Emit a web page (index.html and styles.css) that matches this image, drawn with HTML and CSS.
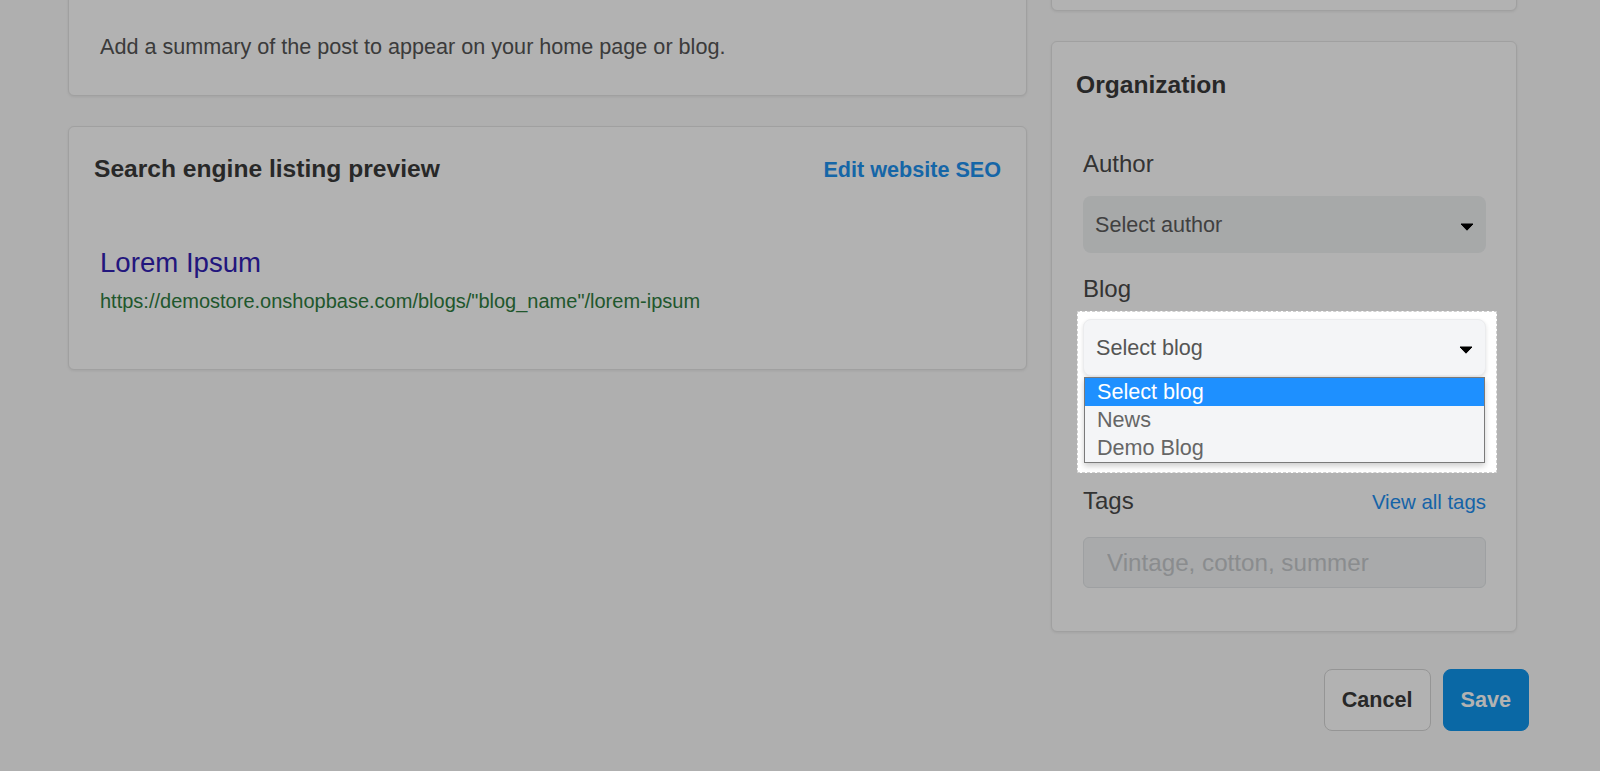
FILE: index.html
```html
<!DOCTYPE html>
<html lang="en">
<head>
    <meta charset="UTF-8">
    <meta name="viewport" content="width=device-width, initial-scale=1.0">
    <title>Edit blog post</title>
    <link rel="stylesheet" href="styles.css">
</head>
<body>
    <div class="page">
        <div class="columns">
            <div class="col-main">
                <div class="card card-excerpt">
                    <p class="hint">Add a summary of the post to appear on your home page or blog.</p>
                </div>

                <div class="card card-seo">
                    <div class="card-head">
                        <h2 class="card-title">Search engine listing preview</h2>
                        <a class="link-bold" href="#">Edit website SEO</a>
                    </div>
                    <div class="seo-preview">
                        <div class="seo-title">Lorem Ipsum</div>
                        <div class="seo-url">https://demostore.onshopbase.com/blogs/"blog_name"/lorem-ipsum</div>
                    </div>
                </div>
            </div>

            <div class="col-side">
                <div class="card card-visibility"></div>

                <div class="card card-org">
                    <h2 class="card-title">Organization</h2>

                    <div class="field">
                        <div class="field-label">Author</div>
                        <div class="select select-dim">
                            <span>Select author</span>
                            <svg class="caret" width="14" height="8" viewBox="0 0 14 8"><path d="M1 1h12L7 7.2z" fill="#000" stroke="#000" stroke-width="1" stroke-linejoin="round"/></svg>
                        </div>
                    </div>

                    <div class="field">
                        <div class="field-label">Blog</div>
                        <!-- tutorial spotlight: sits above the overlay -->
                        <div class="spot">
                            <div class="select select-open">
                                <span>Select blog</span>
                                <svg class="caret" width="14" height="8" viewBox="0 0 14 8"><path d="M1 1h12L7 7.2z" fill="#000" stroke="#000" stroke-width="1" stroke-linejoin="round"/></svg>
                            </div>
                            <ul class="options">
                                <li class="option active">Select blog</li>
                                <li class="option">News</li>
                                <li class="option">Demo Blog</li>
                            </ul>
                        </div>
                    </div>

                    <div class="field field-tags">
                        <div class="field-row">
                            <div class="field-label">Tags</div>
                            <a class="link" href="#">View all tags</a>
                        </div>
                        <input class="text-input" type="text" placeholder="Vintage, cotton, summer">
                    </div>
                </div>
            </div>
        </div>

        <div class="actions">
            <button class="btn btn-cancel">Cancel</button>
            <button class="btn btn-save">Save</button>
        </div>
    </div>

    <div class="overlay"></div>
</body>
</html>
```

FILE: styles.css
```css
body {
    margin: 0;
    background: #fbfbfb;
    font-family: "Liberation Sans", Arial, sans-serif;
    font-size: 21.6px;
    color: #3d3d3d;
}
.page {
    margin-top: -40px;
    padding: 0 71px 0 68px;
}
.columns {
    display: flex;
    gap: 24px;
    align-items: flex-start;
}
.col-main,
.col-side {
    display: flex;
    flex-direction: column;
    gap: 30px;
}
.col-main {
    width: 959px;
}
.col-side {
    width: 466px;
}
.card {
    background: #fff;
    border: 1px solid #e6e6e6;
    border-radius: 6px;
    box-shadow: 0 1px 3px rgba(0,0,0,0.08);
}
.card-title {
    margin: 0;
    font-size: 24.6px;
    line-height: 30px;
    font-weight: bold;
    color: #3a3a3a;
}

/* excerpt */
.card-excerpt {
    padding: 71px 31px 33px;
}
.hint {
    margin: 0;
    line-height: 30px;
    color: #555;
}

/* seo preview */
.card-seo {
    padding: 27px 25px 55px;
}
.card-head {
    display: flex;
    justify-content: space-between;
    align-items: baseline;
}
.link-bold {
    font-weight: bold;
    color: #1f93f0;
    text-decoration: none;
}
.seo-preview {
    margin: 62px 0 0 6px;
}
.seo-title {
    font-size: 27.6px;
    line-height: 34px;
    color: #3222b4;
}
.seo-url {
    margin-top: 8px;
    font-size: 20px;
    line-height: 26px;
    color: #2f7d41;
}

/* sidebar */
.card-visibility {
    height: 49px;
}
.card-org {
    padding: 28px 24px 43px;
}
.field {
    margin: 21px 6px 0 7px;
}
.card-title + .field {
    margin-top: 49px;
}
.field-tags {
    margin-top: 13px;
}
.field-label {
    font-size: 24px;
    line-height: 30px;
    color: #4a4a4a;
    margin-bottom: 17px;
}
.field-row {
    display: flex;
    justify-content: space-between;
    align-items: baseline;
    margin-bottom: 4px;
}
.link {
    font-size: 20.4px;
    color: #1f8ff0;
    text-decoration: none;
}
.select {
    height: 57px;
    box-sizing: border-box;
    display: flex;
    align-items: center;
    justify-content: space-between;
    padding: 0 12px;
    border-radius: 8px;
    color: #5c5c5c;
}
.select-dim {
    background: #f0f2f3;
}
.caret {
    margin-top: 4px;
}
.text-input {
    display: block;
    width: 100%;
    height: 51px;
    box-sizing: border-box;
    padding: 0 23px;
    border: 1px solid #e2e5e8;
    border-radius: 6px;
    background: #f2f4f5;
    font-family: inherit;
    font-size: 24.2px;
    color: #3d3d3d;
}
.text-input::placeholder {
    color: #c6c9cc;
}

/* open blog dropdown, highlighted over the overlay */
.spot {
    position: relative;
    z-index: 11;
    margin: -10px -11px 0 -6px;
    padding: 7px 10px 9px 5px;
    background: #fff;
    border: 1px dashed #cfcfcf;
}
.select-open {
    background: #f4f5f7;
    border: 1px solid #ebecee;
    box-shadow: 0 2px 4px rgba(0,0,0,0.12);
    color: #555;
}
.options {
    list-style: none;
    margin: 1px 1px 0;
    padding: 0;
    background: #f4f5f7;
    border: 1px solid #7a7a7a;
    box-shadow: 0 3px 6px rgba(0,0,0,0.2);
}
.option {
    height: 28px;
    line-height: 28px;
    padding: 0 12px;
    color: #666;
}
.option.active {
    background: #1e90ff;
    color: #fff;
}

/* footer buttons */
.actions {
    display: flex;
    justify-content: flex-end;
    gap: 12px;
    margin-top: 37px;
}
.btn {
    height: 62px;
    padding: 0 17px;
    border-radius: 8px;
    font-family: inherit;
    font-size: 21.6px;
    font-weight: bold;
    cursor: pointer;
}
.btn-cancel {
    background: #fff;
    border: 1px solid #d6d6d6;
    color: #3a3a3a;
}
.btn-save {
    background: #0f95ec;
    border: 1px solid #0f95ec;
    color: #fff;
}

.overlay {
    position: fixed;
    inset: 0;
    z-index: 10;
    background: rgba(0,0,0,0.3);
}
```
